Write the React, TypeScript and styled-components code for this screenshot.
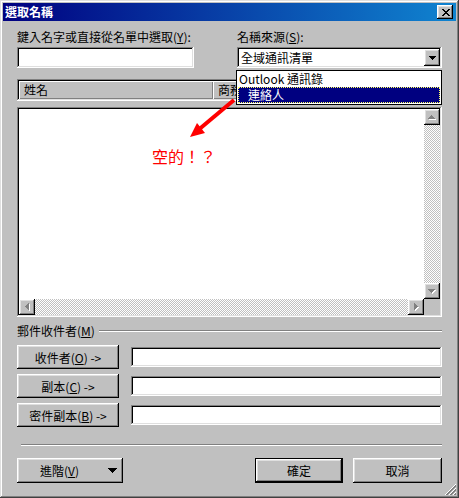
import React from 'react';
import styled, { createGlobalStyle, css } from 'styled-components';

const FONT = `"Noto Sans CJK TC", "Noto Sans CJK SC", "Liberation Sans", sans-serif`;

const Global = createGlobalStyle`
  html, body { margin: 0; padding: 0; background: #c0c0c0; }
  body { font-family: ${FONT}; font-size: 12px; }
  * { box-sizing: border-box; }
`;

const raised = css`
  box-shadow: inset -1px -1px #000, inset 1px 1px #fff, inset -2px -2px #808080, inset 2px 2px #dfdfdf;
`;
const sunken = css`
  box-shadow: inset -1px -1px #fff, inset 1px 1px #808080, inset -2px -2px #dfdfdf, inset 2px 2px #000;
`;

const Window = styled.div`
  position: relative;
  width: 459px;
  height: 498px;
  padding: 3px;
  background: #c0c0c0;
  color: #000;
  font-family: ${FONT};
  font-size: 12px;
  display: flex;
  flex-direction: column;
  box-shadow: inset -1px -1px #404040, inset 1px 1px #dfdfdf, inset -2px -2px #808080, inset 2px 2px #fff;
`;

const TitleBar = styled.div`
  height: 18px;
  display: flex;
  align-items: center;
  justify-content: space-between;
  padding: 0 3px 0 2px;
  background: linear-gradient(to right, #000080, #1084d0);
  color: #fff;
  font-weight: bold;
  line-height: 14px;
`;

const CloseButton = styled.div`
  width: 16px;
  height: 14px;
  background: #c0c0c0;
  display: flex;
  align-items: center;
  justify-content: center;
  padding-left: 1px;
  ${raised}
`;

const Content = styled.div`
  flex: 1;
  display: flex;
  flex-direction: column;
  padding: 0 14px;
`;

const TopRow = styled.div`
  display: grid;
  grid-template-columns: 1fr 205px;
  margin-top: 9px;
`;

const Field = styled.div`
  display: flex;
  flex-direction: column;
  gap: 3px;
`;

const Label = styled.div`
  height: 14px;
  line-height: 14px;
  white-space: nowrap;
`;

const TextBox = styled.div<{ $w?: number }>`
  width: ${p => (p.$w ? `${p.$w}px` : 'auto')};
  flex: ${p => (p.$w ? 'none' : '1')};
  height: ${p => (p.$w ? 21 : 20)}px;
  background: #fff;
  ${sunken}
`;

const ComboWrap = styled.div`
  position: relative;
`;

const Combo = styled.div`
  height: 21px;
  background: #fff;
  display: flex;
  align-items: center;
  padding: 2px;
  ${sunken}
`;

const ComboText = styled.div`
  flex: 1;
  padding-left: 2px;
  line-height: 17px;
`;

const ComboButton = styled.div`
  width: 16px;
  height: 17px;
  background: #c0c0c0;
  display: flex;
  align-items: center;
  justify-content: center;
  ${raised}
`;

const DropList = styled.div`
  position: absolute;
  z-index: 2;
  top: calc(100% + 2px);
  left: -1px;
  width: 206px;
  background: #fff;
  border: 1px solid #000;
  padding-bottom: 1px;
`;

const DropItem = styled.div<{ $selected?: boolean; $indent?: number }>`
  height: 16px;
  line-height: 14px;
  margin: 0 1px;
  padding-left: ${p => p.$indent ?? 0}px;
  white-space: nowrap;
  border: 1px solid transparent;
  ${p =>
    p.$selected &&
    css`
      background: #000080;
      color: #fff;
      border: 1px dotted #ffff60;
    `}
`;

const HeaderBox = styled.div`
  margin-top: 11px;
  height: 22px;
  padding: 2px;
  display: flex;
  background: #c0c0c0;
  ${sunken}
`;

const HeaderCell = styled.div<{ $w?: number }>`
  width: ${p => (p.$w ? `${p.$w}px` : 'auto')};
  flex: ${p => (p.$w ? 'none' : '1')};
  padding-left: 5px;
  line-height: 18px;
  white-space: nowrap;
  overflow: hidden;
  box-shadow: inset 1px 1px #fff, inset -1px -1px #808080;
`;

const HeaderText = styled.div<{ $max?: number }>`
  max-width: ${p => (p.$max ? `${p.$max}px` : 'none')};
  overflow: hidden;
  white-space: nowrap;
`;

const ListBody = styled.div`
  position: relative;
  margin-top: 6px;
  height: 210px;
  padding: 2px;
  display: grid;
  grid-template-columns: 1fr 16px;
  grid-template-rows: 1fr 16px;
  ${sunken}
`;

const ListArea = styled.div`
  background: #fff;
`;

const track = css`
  background-color: #fff;
  background-image: repeating-conic-gradient(#c0c0c0 0 25%, #fff 0 50%);
  background-size: 2px 2px;
`;

const VScroll = styled.div`
  display: flex;
  flex-direction: column;
  ${track}
`;

const HScroll = styled.div`
  display: flex;
  ${track}
`;

const Corner = styled.div`
  background: #c0c0c0;
`;

const ScrollBtn = styled.div`
  width: 16px;
  height: 16px;
  flex: none;
  background: #c0c0c0;
  display: flex;
  align-items: center;
  justify-content: center;
  ${raised}
`;

const Spacer = styled.div`
  flex: 1;
`;

const Annotation = styled.div`
  position: absolute;
  left: 135px;
  top: 40px;
  color: #ff0000;
  font-size: 16px;
  line-height: 18px;
  white-space: nowrap;
`;

const ArrowOverlay = styled.svg`
  position: absolute;
  left: 180px;
  top: 95px;
  z-index: 3;
  pointer-events: none;
`;

const SectionHeader = styled.div`
  margin-top: 7px;
  display: flex;
  align-items: center;
  gap: 4px;
  height: 14px;
  line-height: 14px;
`;

const EtchedLine = styled.div<{ $indent?: number }>`
  flex: 1;
  height: 2px;
  margin-left: ${p => p.$indent ?? 0}px;
  border-top: 1px solid #808080;
  border-bottom: 1px solid #fff;
`;

const Rows = styled.div`
  margin-top: 7px;
  display: flex;
  flex-direction: column;
  gap: 5px;
`;

const Row = styled.div`
  display: flex;
  align-items: center;
  gap: 12px;
`;

const Button = styled.div<{ $w: number; $h?: number; $default?: boolean }>`
  width: ${p => p.$w}px;
  height: ${p => p.$h ?? 24}px;
  flex: none;
  background: #c0c0c0;
  display: flex;
  align-items: center;
  justify-content: center;
  white-space: nowrap;
  ${raised}
  ${p =>
    p.$default &&
    css`
      border: 1px solid #000;
    `}
`;

const SplitButton = styled(Button)`
  justify-content: space-between;
  padding: 0 6px 0 23px;
`;

const BottomSep = styled.div`
  margin-top: 17px;
  display: flex;
`;

const BottomRow = styled.div`
  margin-top: 12px;
  display: flex;
  gap: 10px;
`;

const Grip = styled.svg`
  position: absolute;
  right: 2px;
  bottom: 2px;
`;

const Pixels = ({ rows, color, shadow }: { rows: string[]; color: string; shadow?: string }) => {
  const w = Math.max(...rows.map(r => r.length)) + (shadow ? 1 : 0);
  const h = rows.length + (shadow ? 1 : 0);
  const pts: [number, number][] = [];
  rows.forEach((r, y) => [...r].forEach((c, x) => { if (c === '#') pts.push([x, y]); }));
  return (
    <svg width={w} height={h} viewBox={`0 0 ${w} ${h}`} shapeRendering="crispEdges">
      {shadow && pts.map(([x, y]) => <rect key={`s${x}-${y}`} x={x + 1} y={y + 1} width={1} height={1} fill={shadow} />)}
      {pts.map(([x, y]) => <rect key={`${x}-${y}`} x={x} y={y} width={1} height={1} fill={color} />)}
    </svg>
  );
};

const X_GLYPH = ['##    ##', ' ##  ## ', '  ####  ', '   ##   ', '  ####  ', ' ##  ## ', '##    ##'];
const UP = ['   #   ', '  ###  ', ' ##### ', '#######'];
const DOWN = ['#######', ' ##### ', '  ###  ', '   #   '];
const LEFT = ['   #', '  ##', ' ###', '####', ' ###', '  ##', '   #'];
const RIGHT = ['#   ', '##  ', '### ', '####', '### ', '##  ', '#   '];
const BIG_DOWN = ['#########', ' ####### ', '  #####  ', '   ###   ', '    #    '];

export default function App() {
  return (
    <>
      <Global />
      <Window>
        <TitleBar>
          <span>選取名稱</span>
          <CloseButton>
            <Pixels rows={X_GLYPH} color="#000" />
          </CloseButton>
        </TitleBar>
        <Content>
          <TopRow>
            <Field>
              <Label>鍵入名字或直接從名單中選取(<u>Y</u>):</Label>
              <TextBox $w={177} />
            </Field>
            <Field>
              <Label>名稱來源(<u>S</u>):</Label>
              <ComboWrap>
                <Combo>
                  <ComboText>全域通訊清單</ComboText>
                  <ComboButton>
                    <Pixels rows={DOWN} color="#000" />
                  </ComboButton>
                </Combo>
                <DropList>
                  <DropItem>Outlook 通訊錄</DropItem>
                  <DropItem $selected $indent={9}>連絡人</DropItem>
                </DropList>
              </ComboWrap>
            </Field>
          </TopRow>

          <HeaderBox>
            <HeaderCell $w={194}>姓名</HeaderCell>
            <HeaderCell>
              <HeaderText $max={18}>商務電話</HeaderText>
            </HeaderCell>
          </HeaderBox>

          <ListBody>
            <ListArea />
            <VScroll>
              <ScrollBtn><Pixels rows={UP} color="#808080" shadow="#fff" /></ScrollBtn>
              <Spacer />
              <ScrollBtn><Pixels rows={DOWN} color="#808080" shadow="#fff" /></ScrollBtn>
            </VScroll>
            <HScroll>
              <ScrollBtn><Pixels rows={LEFT} color="#808080" shadow="#fff" /></ScrollBtn>
              <Spacer />
              <ScrollBtn><Pixels rows={RIGHT} color="#808080" shadow="#fff" /></ScrollBtn>
            </HScroll>
            <Corner />
            <Annotation>空的！？</Annotation>
          </ListBody>

          <SectionHeader>
            <span>郵件收件者(<u>M</u>)</span>
            <EtchedLine />
          </SectionHeader>

          <Rows>
            <Row>
              <Button $w={102}>收件者(<u>O</u>) -&gt;</Button>
              <TextBox />
            </Row>
            <Row>
              <Button $w={102}>副本(<u>C</u>) -&gt;</Button>
              <TextBox />
            </Row>
            <Row>
              <Button $w={102}>密件副本(<u>B</u>) -&gt;</Button>
              <TextBox />
            </Row>
          </Rows>

          <BottomSep>
            <EtchedLine $indent={4} />
          </BottomSep>

          <BottomRow>
            <SplitButton $w={106} $h={25}>
              <span>進階(<u>V</u>)</span>
              <Pixels rows={BIG_DOWN} color="#000" />
            </SplitButton>
            <Spacer />
            <Button $w={88} $h={25} $default>確定</Button>
            <Button $w={89} $h={25}>取消</Button>
          </BottomRow>
        </Content>

        <ArrowOverlay width="60" height="50" viewBox="0 0 60 50">
          <line x1="54" y1="5" x2="20" y2="33.5" stroke="#ff0000" strokeWidth="4" />
          <polygon points="10,42 25,38 17,28" fill="#ff0000" />
        </ArrowOverlay>

        <Grip width="12" height="12" viewBox="0 0 12 12" shapeRendering="crispEdges">
          <path d="M11 0L0 11M11 4L4 11M11 8L8 11" stroke="#fff" strokeWidth="1" />
          <path d="M11 1L1 11M11 2L2 11M11 5L5 11M11 6L6 11M11 9L9 11M11 10L10 11" stroke="#808080" strokeWidth="1" />
        </Grip>
      </Window>
    </>
  );
}
